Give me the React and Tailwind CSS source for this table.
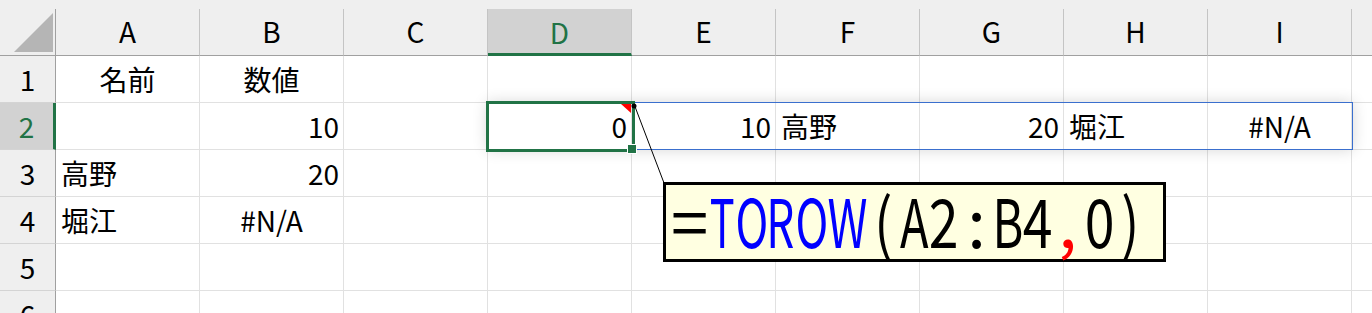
import React from 'react';

const COLS = ['A', 'B', 'C', 'D', 'E', 'F', 'G', 'H', 'I', ''];

// [text, align] per column; missing = empty
const ROWS = [
    { n: 1, cells: [['名前', 'c'], ['数値', 'c']] },
    {
        n: 2,
        cells: [
            null, ['10', 'r'], null, ['0', 'r'], ['10', 'r'],
            ['高野', 'l'], ['20', 'r'], ['堀江', 'l'], ['#N/A', 'c'],
        ],
    },
    { n: 3, cells: [['高野', 'l'], ['20', 'r']] },
    { n: 4, cells: [['堀江', 'l'], ['#N/A', 'c']] },
    { n: 5, cells: [] },
    { n: 6, cells: [] },
];

const BLUE = 'text-[#0000ff]';
const RED = 'text-[#ff0000]';

// glyph, slot width, colour class, horizontal squeeze
const FORMULA = [
    ['=', 35, 'text-black', 'scale-x-100'],
    ['T', 31, BLUE, 'scale-x-[0.62]'],
    ['O', 28, BLUE, 'scale-x-[0.66]'],
    ['R', 29, BLUE, 'scale-x-[0.66]'],
    ['O', 33, BLUE, 'scale-x-[0.66]'],
    ['W', 38, BLUE, 'scale-x-[0.68]'],
    ['(', 34, 'text-black', 'scale-x-[0.8]'],
    ['A', 28, 'text-black', 'scale-x-[0.7]'],
    ['2', 32, 'text-black', 'scale-x-[0.8]'],
    [':', 33, 'text-black', 'scale-x-100'],
    ['B', 31, 'text-black', 'scale-x-[0.7]'],
    ['4', 28, 'text-black', 'scale-x-[0.8]'],
    [',', 31, RED, 'scale-x-100'],
    ['0', 33, 'text-black', 'scale-x-[0.8]'],
    [')', 28, 'text-black', 'scale-x-[0.8]'],
];

const alignClass = { l: 'justify-start pl-[5px]', r: 'justify-end pr-[4px]', c: 'justify-center' };

const Cell = ({ data }) => (
    <div className={`w-[144px] h-[47px] shrink-0 flex items-center border-r border-b border-[#e1e1e1] ${data ? alignClass[data[1]] : ''}`}>
        {data && <span className="leading-none">{data[0]}</span>}
    </div>
);

export default function App() {
    return (
        <div className="relative w-[1372px] h-[313px] overflow-hidden bg-white text-black text-[28px] font-['Noto_Sans_CJK_JP','Noto_Sans',sans-serif]">
            {/* Column headers */}
            <div className="flex bg-[#efefef] pt-[9px]">
                <div className="w-[56px] h-[47px] shrink-0 flex items-end justify-end pr-[2px] pb-[3px] border-r border-b border-r-[#a0a0a0] border-b-[#a0a0a0]">
                    <svg width="39" height="39" viewBox="0 0 39 39">
                        <polygon points="39,0 39,39 0,39" fill="#b5b5b5" />
                    </svg>
                </div>
                {COLS.map((c, i) => (
                    <div
                        key={i}
                        className={`w-[144px] h-[47px] shrink-0 flex items-center justify-center border-r border-r-[#c4c4c4] ${
                            c === 'D'
                                ? 'bg-[#d2d2d2] border-b-[3px] border-b-[#217346] text-[#217346] pt-[1px]'
                                : 'border-b border-b-[#a0a0a0] pb-[2px]'
                        }`}
                    >
                        <span className="leading-none">{c}</span>
                    </div>
                ))}
            </div>

            {/* Rows */}
            {ROWS.map((row) => (
                <div key={row.n} className="flex">
                    <div
                        className={`w-[56px] h-[47px] shrink-0 flex items-center justify-center border-b border-b-[#d4d4d4] ${
                            row.n === 2
                                ? 'bg-[#d2d2d2] border-r-[3px] border-r-[#217346] text-[#217346]'
                                : 'bg-[#efefef] border-r border-r-[#a0a0a0]'
                        }`}
                    >
                        <span className="leading-none">{row.n}</span>
                    </div>
                    {COLS.map((_, i) => (
                        <Cell key={i} data={row.cells[i]} />
                    ))}
                </div>
            ))}

            {/* Spill range outline */}
            <div className="absolute left-[487px] top-[102px] w-[866px] h-[48px] border border-[#3a6fce] shadow-[0_0_14px_rgba(0,0,0,0.16)]" />

            {/* Active cell D2 */}
            <div className="absolute left-[486px] top-[101px] w-[149px] h-[51px] border-[3px] border-[#217346]" />
            <div className="absolute left-[627px] top-[144px] w-[10px] h-[10px] bg-[#217346] border border-white" />

            {/* Comment marker */}
            <svg className="absolute left-[621px] top-[104px]" width="10" height="9" viewBox="0 0 10 9">
                <polygon points="0,0 10,0 10,9" fill="#ff0000" />
            </svg>

            {/* Leader line */}
            <svg className="absolute left-[625px] top-[95px]" width="50" height="100" viewBox="0 0 50 100">
                <line x1="9" y1="9" x2="39" y2="88" stroke="#000" strokeWidth="1" />
                <circle cx="9" cy="11" r="2.5" fill="#000" />
            </svg>

            {/* Formula callout */}
            <div className="absolute left-[663px] top-[182px] w-[503px] h-[80px] bg-[#ffffe1] border-[3px] border-black flex items-start pl-[6px]">
                {FORMULA.map(([ch, w, color, sx], i) => (
                    <span
                        key={i}
                        className={`shrink-0 flex justify-center text-[67px] leading-[67px] ${color} w-[${w}px]`}
                        style={{ width: w }}
                    >
                        <span className={`inline-block ${sx}`}>{ch}</span>
                    </span>
                ))}
            </div>
        </div>
    );
}
